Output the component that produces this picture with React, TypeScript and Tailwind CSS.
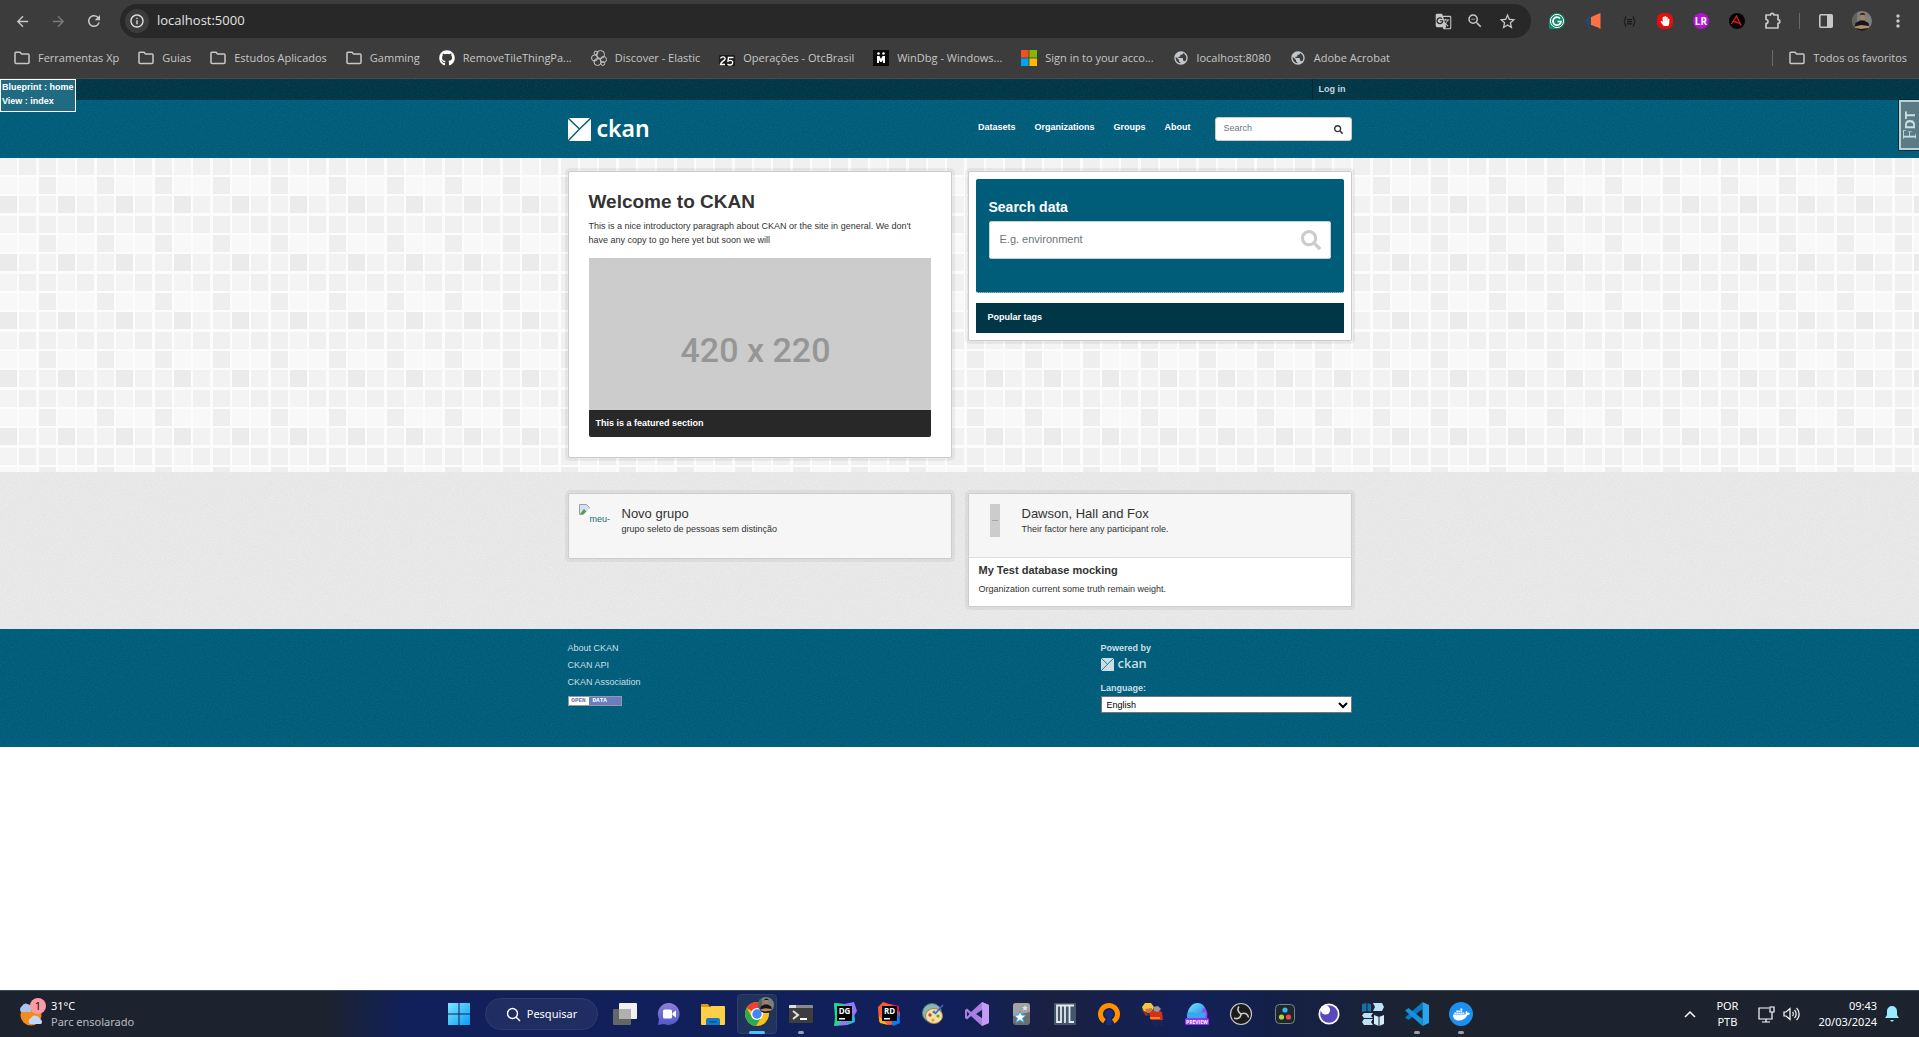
import React from 'react';
import { FaGithub, FaDocker, FaSearch, FaHandPaper } from 'react-icons/fa';
import { MdArrowBack, MdArrowForward, MdRefresh, MdInfoOutline, MdStarBorder, MdMoreVert, MdGTranslate, MdZoomOut, MdPublic } from 'react-icons/md';

/* ---------- shared drawings ---------- */

function Grain({ id, opacity }: { id: string; opacity: string }) {
  return (
    <svg className="pointer-events-none absolute inset-0 h-full w-full" aria-hidden="true" opacity={opacity}>
      <filter id={id}>
        <feTurbulence type="fractalNoise" baseFrequency="0.7" numOctaves="2" />
        <feColorMatrix type="matrix" values="0 0 0 0 1  0 0 0 0 1  0 0 0 0 1  2.5 0 0 0 -1" />
      </filter>
      <rect width="100%" height="100%" filter={`url(#${id})`} />
    </svg>
  );
}

function Tiles() {
  const rows = [
    ['#f4f4f4', '#f0f0f0', '#f0f0f0'],
    ['#f8f8f8', '#f8f8f8', '#eeeeee'],
    ['#ebebeb', '#f2f2f2', '#f2f2f2'],
  ];
  const xs = [0, 19, 39];
  const ys = [0, 19, 38];
  return (
    <svg className="absolute inset-0 h-full w-full" aria-hidden="true">
      <pattern id="tiles" width="58" height="58" patternUnits="userSpaceOnUse">
        <rect width="58" height="58" fill="#fcfcfc" />
        {rows.map((r, j) => r.map((c, i) => <rect key={`${i}-${j}`} x={xs[i]} y={ys[j]} width="17" height="17" fill={c} />))}
      </pattern>
      <rect width="100%" height="100%" fill="url(#tiles)" />
    </svg>
  );
}

function CkanMark({ className, fill, line }: { className: string; fill: string; line: string }) {
  return (
    <svg className={className} viewBox="0 0 23 23" aria-hidden="true">
      <rect width="23" height="23" rx="1" fill={fill} />
      <path d="M0 0 L11.5 11 L23 0 M11.5 11 L0 23" stroke={line} strokeWidth="1.4" fill="none" />
    </svg>
  );
}

function Folder() {
  return (
    <svg className="h-4 w-4 shrink-0" viewBox="0 0 16 16" fill="none" stroke="#c7c7c7" strokeWidth="1.5" aria-hidden="true">
      <path d="M1 3.2a1 1 0 0 1 1-1h4l1.6 1.8H14a1 1 0 0 1 1 1v7.6a1 1 0 0 1-1 1H2a1 1 0 0 1-1-1z" />
    </svg>
  );
}

/* ---------- browser toolbar ---------- */

function Elastic() {
  return (
    <svg className="h-4 w-4 shrink-0" viewBox="0 0 16 16" fill="none" stroke="#c7c7c7" strokeWidth="1" aria-hidden="true">
      <circle cx="9.500" cy="4.500" r="4" />
      <circle cx="5" cy="3" r="1.900" />
      <circle cx="3.500" cy="8" r="3" />
      <circle cx="6.500" cy="12" r="3.500" />
      <circle cx="12.500" cy="9.500" r="3" />
      <circle cx="11.800" cy="13.500" r="1.900" />
    </svg>
  );
}

function Squiggle() {
  return (
    <svg className="h-4 w-4 shrink-0" viewBox="0 0 16 16" fill="none" aria-hidden="true">
      <rect y="5" width="16" height="11" fill="#1c1c1c" rx="1" />
      <path d="M1.500 8.500c1-2.500 5-2 4.500.5C5.500 11 2.500 11 1.500 14.500h4.500M14.500 7.500h-5l-.5 3.500c3-1.500 5.500 0 4.500 2.500s-4 1.500-5 .5" stroke="#fff" strokeWidth="1.400" />
    </svg>
  );
}

function WinDbg() {
  return (
    <svg className="h-4 w-4 shrink-0" viewBox="0 0 16 16" aria-hidden="true">
      <rect width="16" height="16" fill="#0b0b0b" />
      <path d="M4 13V6h2.500L8 9l1.500-3H12v7h-2v-3l-1.200 2H7.200L6 10v3z" fill="#fff" />
      <circle cx="5.500" cy="3.500" r="1.300" fill="#fff" />
      <circle cx="10.500" cy="3.500" r="1.300" fill="#fff" />
    </svg>
  );
}

function Microsoft() {
  return (
    <svg className="h-4 w-4 shrink-0" viewBox="0 0 16 16" aria-hidden="true">
      <rect width="7.600" height="7.600" fill="#f25022" />
      <rect x="8.400" width="7.600" height="7.600" fill="#7fba00" />
      <rect y="8.400" width="7.600" height="7.600" fill="#00a4ef" />
      <rect x="8.400" y="8.400" width="7.600" height="7.600" fill="#ffb900" />
    </svg>
  );
}

const globe = <MdPublic className="h-4 w-4 shrink-0 text-[#c3c7cb]" />;

const bookmarks: { icon: React.ReactNode; label: string }[] = [
  { icon: <Folder />, label: 'Ferramentas Xp' },
  { icon: <Folder />, label: 'Guias' },
  { icon: <Folder />, label: 'Estudos Aplicados' },
  { icon: <Folder />, label: 'Gamming' },
  { icon: <FaGithub className="h-4 w-4 shrink-0 text-white" />, label: 'RemoveTileThingPa...' },
  { icon: <Elastic />, label: 'Discover - Elastic' },
  { icon: <Squiggle />, label: 'Operações - OtcBrasil' },
  { icon: <WinDbg />, label: 'WinDbg - Windows...' },
  { icon: <Microsoft />, label: 'Sign in to your acco...' },
  { icon: globe, label: 'localhost:8080' },
  { icon: globe, label: 'Adobe Acrobat' },
];

function Avatar({ className }: { className: string }) {
  return (
    <svg className={className} viewBox="0 0 20 20" aria-hidden="true">
      <clipPath id="face"><circle cx="10" cy="10" r="10" /></clipPath>
      <g clipPath="url(#face)">
        <rect width="20" height="20" fill="#7d8079" />
        <rect width="5" height="20" fill="#5f635c" />
        <path d="M2 20l1.500-8L8 9.500h4l4.500 2.500L18 20z" fill="#14161a" />
        <ellipse cx="10.500" cy="5.500" rx="2.500" ry="3.300" fill="#a9805f" />
        <path d="M7.800 4.500c0-3.500 5.500-3.500 5.500 0l-1-.8h-3.500z" fill="#1c1512" />
        <path d="M3 15.500l6-1.500 8 1v2l-8 1-6-1z" fill="#b48a66" />
      </g>
    </svg>
  );
}

function IconButton({ label, children }: { label: string; children: React.ReactNode }) {
  return (
    <button type="button" aria-label={label} className="flex h-9 w-9 items-center justify-center text-[#c7c7c7]">
      {children}
    </button>
  );
}

function Toolbar() {
  return (
    <header className="border-b border-[#4a4a4a] bg-[#3c3c3c] font-['Open_Sans','Noto_Sans',sans-serif]">
      <div className="flex h-[42px] items-center pl-1 pr-[3px]">
        <IconButton label="Back"><MdArrowBack className="h-[17px] w-[17px]" /></IconButton>
        <IconButton label="Forward"><MdArrowForward className="h-[17px] w-[17px] text-[#7b7b7b]" /></IconButton>
        <IconButton label="Reload"><MdRefresh className="h-[18px] w-[18px]" /></IconButton>
        <div className="ml-2 flex h-[34px] flex-1 items-center rounded-full bg-[#282828] pl-[5px] pr-2">
          <span className="flex h-6 w-6 items-center justify-center rounded-full bg-[#3c3c3c] text-[#e3e3e3]">
            <MdInfoOutline className="h-4 w-4" />
          </span>
          <input aria-label="Address" defaultValue="localhost:5000" className="ml-2 min-w-0 flex-1 bg-transparent text-[13px] text-[#e3e3e3] outline-none" />
          <button type="button" aria-label="Translate" className="flex h-8 w-8 items-center justify-center text-[#c7c7c7]"><MdGTranslate className="h-[17px] w-[17px]" /></button>
          <button type="button" aria-label="Zoom" className="flex h-8 w-8 items-center justify-center text-[#c7c7c7]"><MdZoomOut className="h-[18px] w-[18px]" /></button>
          <button type="button" aria-label="Bookmark" className="flex h-8 w-8 items-center justify-center text-[#c7c7c7]"><MdStarBorder className="h-[19px] w-[19px]" /></button>
        </div>
        <div className="ml-2 flex items-center">
          <IconButton label="Grammarly">
            <svg className="h-4 w-4" viewBox="0 0 16 16" fill="none"><path d="M0 8a8 8 0 1 1 8 8H0z" fill="#128a6c" /><circle cx="8" cy="8" r="6.600" stroke="#fff" strokeWidth="1" /><path d="M11 5.500A4 4 0 1 0 12 8.500H8.500" stroke="#fff" strokeWidth="1.700" /></svg>
          </IconButton>
          <IconButton label="Announcer">
            <svg className="h-4 w-4" viewBox="0 0 16 16"><path d="M5 4.500L13 1l2.500-1v16L13 14.500 5 11.500z" fill="#ff7043" /><path d="M6 4v8H4.500l1 3.500H3.500L2 12a4 4 0 0 1-1.500-4A4 4 0 0 1 4 4z" fill="#2a4566" /></svg>
          </IconButton>
          <IconButton label="JSON">
            <svg className="h-[13px] w-[13px]" viewBox="0 0 16 16" fill="none" stroke="#161616" strokeWidth="1.400"><path d="M4 2C1.500 2 3.500 7.500 1 8c2.500.5.5 6 3 6M12 2c2.500 0 .5 5.500 3 6-2.500.5-.5 6-3 6M5 5.500h6M5 8.200h6M5 11h6" /></svg>
          </IconButton>
          <IconButton label="Blocker">
            <span className="flex h-4 w-4 items-center justify-center rounded-[6px] bg-[#e60d0d] text-white"><FaHandPaper className="h-[10px] w-[10px]" /></span>
          </IconButton>
          <IconButton label="LR">
            <span className="flex h-4 w-4 items-center justify-center rounded-full bg-[#b511d6] text-[10px] font-bold leading-none text-white">LR</span>
          </IconButton>
          <IconButton label="A">
            <svg className="h-4 w-4" viewBox="0 0 16 16" fill="none"><circle cx="8" cy="8" r="8" fill="#050505" /><path d="M2.500 11L7.500 3l4.500 9.500M4.500 8.500c3 0 4 1 8 3" stroke="#e31b23" strokeWidth="1.300" /></svg>
          </IconButton>
          <IconButton label="Extensions">
            <svg className="h-[18px] w-[18px]" viewBox="0 0 18 18" fill="none" stroke="#c7c7c7" strokeWidth="1.700" strokeLinejoin="round"><path d="M2 3h4.500a1.700 1.700 0 0 1 3.400 0H14v4.700a1.800 1.800 0 0 1 0 3.600V16H2v-4.500a2 2 0 0 0 0-4z" /></svg>
          </IconButton>
          <span className="mx-2 h-4 w-px bg-[#6a6a6a]" />
          <IconButton label="Side panel">
            <svg className="h-4 w-4" viewBox="0 0 16 16"><rect x="1.800" y="1.800" width="12.400" height="12.400" rx="1" fill="none" stroke="#c7c7c7" strokeWidth="1.600" /><rect x="9" y="2" width="5" height="12" fill="#c7c7c7" /></svg>
          </IconButton>
          <IconButton label="Profile"><Avatar className="h-5 w-5" /></IconButton>
          <IconButton label="Menu"><MdMoreVert className="h-5 w-5" /></IconButton>
        </div>
      </div>
      <nav className="flex h-9 items-center pb-1 pl-[14px] pr-3 text-[11px] text-[#c7c7c7]">
        <div className="flex flex-1 items-center gap-[19px]">
          {bookmarks.map((b) => (
            <a key={b.label} href="#" className="flex items-center gap-2 whitespace-nowrap">
              {b.icon}
              {b.label}
            </a>
          ))}
        </div>
        <span className="mr-4 h-4 w-px bg-[#6a6a6a]" />
        <a href="#" className="flex items-center gap-2 whitespace-nowrap"><Folder />Todos os favoritos</a>
      </nav>
    </header>
  );
}

/* ---------- site ---------- */

const container = 'relative mx-auto w-[784px] max-w-full';

function SiteHeader() {
  return (
    <>
      <div className="relative bg-[#013647]">
        <Grain id="grain-top" opacity="0.04" />
        <div className={`${container} flex h-[21px] justify-end`}>
          <a href="#" className="flex items-center border-l border-[#012835] px-[6px] text-[9px] font-bold text-[#c6d7db]">Log in</a>
        </div>
      </div>
      <div className="relative bg-[#005d7a]">
        <Grain id="grain-head" opacity="0.04" />
        <div className={`${container} flex h-[58px] items-center justify-between`}>
          <a href="#" className="flex items-center gap-[6px] font-['Noto_Sans',sans-serif] text-[23px] font-semibold leading-6 text-white">
            <CkanMark className="h-[23px] w-[23px]" fill="#fff" line="#005d7a" />
            <span className="pb-[2px]">ckan</span>
          </a>
          <div className="flex items-center gap-6">
            <nav className="flex gap-[19px] pb-[2px] text-[9px] font-bold text-white">
              <a href="#">Datasets</a>
              <a href="#">Organizations</a>
              <a href="#">Groups</a>
              <a href="#">About</a>
            </nav>
            <form className="flex h-6 w-[137px] items-center rounded-[3px] border border-[#ccc] bg-white px-2">
              <input aria-label="Search" placeholder="Search" className="min-w-0 flex-1 text-[9px] outline-none placeholder:text-[#6c757d]" />
              <button type="button" aria-label="Submit search" className="text-[#333]"><FaSearch className="h-[9px] w-[9px]" /></button>
            </form>
          </div>
        </div>
      </div>
    </>
  );
}

function Hero() {
  return (
    <main className="relative">
      <Tiles />
      <div className={`${container} grid grid-cols-2 items-start gap-4 pb-[14px] pt-[13px]`}>
        <section className="rounded-[2px] border border-[#ccc] bg-white p-5 shadow-[0_0_0_3px_rgba(0,0,0,0.05)]">
          <h1 className="text-[19px] font-bold leading-5 text-[#333]">Welcome to CKAN</h1>
          <p className="mt-[7px] text-[9px] leading-[14px]">
            This is a nice introductory paragraph about CKAN or the site in general. We don't have any copy to go here yet but soon we will
          </p>
          <figure className="mt-[11px]">
            <div className="flex h-[152px] items-end justify-center bg-[#ccc] pb-10 pr-2 font-[Roboto,sans-serif] text-[34px] font-medium leading-[40px] text-[#969696]">420 x 220</div>
            <figcaption className="rounded-b-[2px] bg-[#282828] px-[7px] pb-px text-[9px] font-bold leading-[26px] text-white">This is a featured section</figcaption>
          </figure>
        </section>
        <section className="rounded-[2px] border border-[#ccc] bg-white p-[7px] shadow-[0_0_0_3px_rgba(0,0,0,0.05)]">
          <div className="h-[114px] rounded-[2px] border-b border-dotted border-[#ddd] bg-[#005d7a] px-[13px] pt-5">
            <label htmlFor="q" className="block text-[14px] font-bold leading-4 text-white">Search data</label>
            <div className="mt-[6px] flex h-[38px] items-center rounded-[2px] border border-[#ccc] bg-white pl-[10px] pr-[9px]">
              <input id="q" placeholder="E.g. environment" className="min-w-0 flex-1 pb-[2px] text-[11px] outline-none placeholder:text-[#6c757d]" />
              <button type="button" aria-label="Search datasets" className="text-[#ccc]"><FaSearch className="h-5 w-5" /></button>
            </div>
          </div>
          <h2 className="mt-[10px] bg-[#013647] px-3 pb-[2px] text-[9px] font-bold leading-7 text-white">Popular tags</h2>
        </section>
      </div>
    </main>
  );
}

function Featured() {
  return (
    <div className="relative bg-[#e6e6e6]">
      <Grain id="grain-mid" opacity="0.25" />
      <div className={`${container} grid grid-cols-2 items-start gap-4 pb-[22px] pt-[21px]`}>
        <section className="flex h-[66px] gap-[10px] rounded-[2px] border border-[#ccc] bg-[#f6f6f6] px-[10px] pt-[10px] shadow-[0_0_0_3px_rgba(0,0,0,0.05)]">
          <a href="#" className="relative h-[33px] w-[33px] shrink-0 text-[9px] text-[#206b82]">
            <svg className="h-[11px] w-[11px]" viewBox="0 0 11 11" aria-hidden="true">
              <path d="M.5.500h7l3 3v7H.5z" fill="#cfe0fb" stroke="#a0a0a0" />
              <path d="M1 10l4-5 5 5z" fill="#54a245" />
              <path d="M4 11L11 4v7z" fill="#fff" />
            </svg>
            <span className="absolute left-[11px] top-[9px] leading-3">meu-</span>
          </a>
          <div>
            <h3 className="mt-[3px] text-[13px] font-medium leading-[13px] text-[#333]">Novo grupo</h3>
            <p className="mt-[3px] text-[9px] leading-3">grupo seleto de pessoas sem distinção</p>
          </div>
        </section>
        <section className="rounded-[2px] border border-[#ccc] bg-white shadow-[0_0_0_3px_rgba(0,0,0,0.05)]">
          <div className="flex h-[64px] gap-[10px] border-b border-[#ddd] bg-[#f6f6f6] px-[10px] pt-[10px]">
            <a href="#" aria-label="Dawson, Hall and Fox" className="flex h-[33px] w-[33px] shrink-0 justify-center">
              <span className="flex h-[33px] w-[10px] items-center justify-center bg-[#ccc]"><span className="h-px w-[6px] bg-[#a5a5a5]" /></span>
            </a>
            <div>
              <h3 className="mt-[3px] text-[13px] font-medium leading-[13px] text-[#333]">Dawson, Hall and Fox</h3>
              <p className="mt-[3px] text-[9px] leading-3">Their factor here any participant role.</p>
            </div>
          </div>
          <div className="px-[10px] pb-[11px] pt-[5px]">
            <h3 className="text-[11px] font-bold leading-[14px] text-[#333]">My Test database mocking</h3>
            <p className="mt-[6px] text-[9px] leading-3">Organization current some truth remain weight.</p>
          </div>
        </section>
      </div>
    </div>
  );
}

function SiteFooter() {
  return (
    <footer className="relative bg-[#005d7a] text-[9px] text-[#ccdfe4]">
      <Grain id="grain-foot" opacity="0.04" />
      <div className={`${container} flex h-[118px] justify-between pt-3`}>
        <ul className="flex flex-col gap-[3px] leading-[14px]">
          <li><a href="#">About CKAN</a></li>
          <li><a href="#">CKAN API</a></li>
          <li><a href="#">CKAN Association</a></li>
          <li className="mt-1">
            <a href="#" className="flex h-[10px] w-[54px] border border-[#999] bg-white font-['Liberation_Mono',monospace] text-[6px] font-bold leading-[8px]">
              <span className="w-5 text-center text-[#6273b5]">OPEN</span>
              <span className="flex-1 bg-[#6a7dc0] pl-1 text-white">DATA</span>
            </a>
          </li>
        </ul>
        <div className="w-[251px]">
          <strong className="block leading-[14px]">Powered by</strong>
          <a href="#" className="mt-[3px] flex h-[13px] items-center gap-1 font-['Noto_Sans',sans-serif] text-[13px] font-medium leading-[13px]">
            <CkanMark className="h-[13px] w-[13px]" fill="#ccdfe4" line="#005d7a" />
            <span className="pb-[2px]">ckan</span>
          </a>
          <label htmlFor="lang" className="mt-[10px] block font-bold leading-[14px]">Language:</label>
          <div className="relative">
            <select id="lang" className="mt-px block h-[17px] w-full appearance-none border border-[#767676] bg-white pl-[5px] text-[9px] leading-[14px] text-black">
              <option>English</option>
            </select>
            <svg className="pointer-events-none absolute right-1 top-1 h-[10px] w-[10px]" viewBox="0 0 10 10" fill="none" stroke="#000" strokeWidth="2" aria-hidden="true"><path d="M1 3l4 4 4-4" /></svg>
          </div>
        </div>
      </div>
    </footer>
  );
}

/* ---------- taskbar ---------- */

const box = 'h-6 w-6';

const apps: { name: string; art: React.ReactNode; state?: 'active' | 'open' }[] = [
  { name: 'Task view', art: <svg className={box} viewBox="0 0 24 24"><rect x="6" y="1" width="18" height="16" rx="1" fill="#f1f1f1" /><rect y="7" width="18" height="16" rx="1" fill="#666" /><rect x="6" y="7" width="12" height="10" fill="#b0b0b0" /></svg> },
  { name: 'Chat', art: <svg className={box} viewBox="0 0 24 24"><defs><linearGradient id="chat" x1="0" y1="0" x2="0" y2="1"><stop stopColor="#8f7fd8" /><stop offset="1" stopColor="#5059c9" /></linearGradient></defs><path d="M12 1a11 11 0 1 1-5 21L1 23l1-6A11 11 0 0 1 12 1z" fill="url(#chat)" /><rect x="6" y="7.500" width="9" height="9" rx="1.500" fill="#fff" /><path d="M15.500 11l3.500-2.500v7L15.500 13z" fill="#fff" /></svg> },
  { name: 'File explorer', art: <svg className={box} viewBox="0 0 24 24"><path d="M0 3a1 1 0 0 1 1-1h6l2 3H0z" fill="#dd9a10" /><path d="M0 5h9l1-1h13a1 1 0 0 1 1 1v17a1 1 0 0 1-1 1H1a1 1 0 0 1-1-1z" fill="#ffcf48" /><path d="M5 23v-5a2 2 0 0 1 2-2h10a2 2 0 0 1 2 2v5z" fill="#1279c9" /><rect x="8" y="19" width="8" height="1.500" fill="#0a4f93" /></svg> },
  { name: 'Chrome', state: 'active', art: <span className="relative"><svg className={box} viewBox="0 0 24 24"><circle cx="12" cy="12" r="12" fill="#fbc116" /><path d="M12 12L1.600 6A12 12 0 0 1 22.400 6H12z" fill="#ea4335" /><path d="M1.600 6A12 12 0 0 0 11 23.950L16.500 15 6.800 15z" fill="#2da94f" /><circle cx="12" cy="12" r="6" fill="#fff" /><circle cx="12" cy="12" r="4.700" fill="#4285f4" /></svg><span className="absolute -right-[5px] -top-[5px]"><Avatar className="h-4 w-4" /></span></span> },
  { name: 'Terminal', state: 'open', art: <svg className={box} viewBox="0 0 24 24"><rect y="3" width="24" height="18" rx="1" fill="#3d3d3d" /><path d="M0 6V4a1 1 0 0 1 1-1h22a1 1 0 0 1 1 1v2z" fill="#8a8a8a" /><path d="M0 6V4a1 1 0 0 1 1-1h6v3z" fill="#ddd" /><path d="M4 9l5 4-5 4" fill="none" stroke="#e0e0e0" strokeWidth="2" /><rect x="11" y="16" width="7" height="2" fill="#fff" /></svg> },
  { name: 'DataGrip', art: <svg className={box} viewBox="0 0 24 24"><path d="M1 1l10 1 10-2 3 9-3 5 1 6-8 3-12 1 1-8z" fill="#9775f8" /><path d="M1 1l10 1 3 6-8 15-5 1 1-8z" fill="#22d88f" /><path d="M12 23l8-2 2-4-1-5z" fill="#22b8cf" /><rect x="4" y="4" width="15" height="15" fill="#000" /><text x="11.500" y="12" textAnchor="middle" fontSize="8" fontWeight="700" fontFamily="Open Sans" fill="#fff">DG</text><rect x="6" y="16" width="6" height="1.500" fill="#fff" /></svg> },
  { name: 'Rider', art: <svg className={box} viewBox="0 0 24 24"><path d="M1 5l5-5 6 2 9 2 2 8-2 10-9 1L2 20z" fill="#ff5a36" /><path d="M2 14l9 9-8-2z" fill="#fdb60d" /><path d="M14 18l8-8 1 11-7 3z" fill="#087cfa" /><path d="M14 2l8 2v7z" fill="#dd1265" /><rect x="5" y="4" width="15" height="15" fill="#000" /><text x="12.500" y="12" textAnchor="middle" fontSize="8" fontWeight="700" fontFamily="Open Sans" fill="#fff">RD</text><rect x="7" y="16" width="6" height="1.500" fill="#fff" /></svg> },
  { name: 'Paint', art: <svg className={box} viewBox="0 0 24 24"><circle cx="11" cy="11" r="9.500" fill="#8ab7b5" stroke="#4e7d7e" /><ellipse cx="13" cy="14" rx="8.500" ry="7.500" fill="#f3dfa8" stroke="#a98543" /><circle cx="9" cy="13" r="1.700" fill="#d6402b" /><circle cx="13" cy="10" r="1.500" fill="#3c7cd0" /><circle cx="17" cy="14" r="1.600" fill="#55a630" /><circle cx="12" cy="18" r="1.600" fill="#e7a31c" /><path d="M14 12l8-9" stroke="#3b63c4" strokeWidth="1.600" /></svg> },
  { name: 'Visual Studio', art: <svg className={box} viewBox="0 0 24 24"><path d="M17 0l7 3v18l-7 3L6 14l-4 3.500L0 16V8l2-1.500L6 10zM17.500 7.500L11 12l6.500 4.500zM2 9.500v5L4.500 12z" fill="#a77fe0" fillRule="evenodd" /><path d="M17 0l7 3v18l-7 3z" fill="#c9a6f7" opacity=".75" /></svg> },
  { name: 'Anki', art: <svg className={box} viewBox="0 0 24 24"><rect x="4" y="1" width="17" height="22" rx="3" fill="#6d6d6d" /><path d="M4 4a3 3 0 0 1 3-3h11a3 3 0 0 1 3 3v6L4 14z" fill="#a3a3a3" /><path d="M11 9l1.600 4 4.400.3-3.400 2.800 1.200 4.400-3.800-2.500-3.800 2.500 1.200-4.400L5 13.300l4.400-.3z" fill="#fff" stroke="#3ea6e6" /><path d="M16 3l.9 2 2.100.2-1.700 1.400.6 2.200L16 7.600l-1.900 1.200.6-2.200L13 5.200 15.100 5z" fill="#cfe9fa" /></svg> },
  { name: 'OTC', art: <svg className={box} viewBox="0 0 24 24" fill="none"><rect x="1" y="1" width="22" height="22" fill="#43566b" /><path d="M4 3.500h4v16.500H4zM8 3.500h13M12 3.500v17.500M16.500 3.500V21M21 20h-4" stroke="#e6e9ee" strokeWidth="1.800" /></svg> },
  { name: 'OpenVPN', art: <svg className={box} viewBox="0 0 24 24"><circle cx="12" cy="12" r="8.500" fill="none" stroke="#ff9100" strokeWidth="5" strokeDasharray="44 9.400" transform="rotate(122 12 12)" /><circle cx="12" cy="12" r="4" fill="#1a2c80" /><path d="M10.500 14h3l1.500 9H9z" fill="#1a2c80" /></svg> },
  { name: 'Game', art: <svg className={box} viewBox="0 0 24 24"><path d="M1 5l3-4h6l3 4-2 4-8 1z" fill="#f4c542" /><path d="M4 7l7-1v5H6z" fill="#c77c43" /><path d="M0 7l5 3 3 3-3 1z" fill="#8a3a1c" /><path d="M8 11l6-4 7 3 1 9-12-1z" fill="#d2301c" /><path d="M12 5l5-1 3 3-3 3-4-1z" fill="#9a9a9a" /><path d="M9 15h10v2H9z" fill="#e98b1a" /><path d="M12 18h10l1 6h-4l-1-3-1 3h-5z" fill="#19245b" /></svg> },
  { name: 'Preview', art: <svg className={box} viewBox="0 0 24 24"><defs><linearGradient id="pv" x1="0" y1="0" x2="1" y2="1"><stop stopColor="#6df0ff" /><stop offset="1" stopColor="#2b73e8" /></linearGradient></defs><path d="M2 16c0-7 3-15 11-15 5 0 9 5 9 15z" fill="url(#pv)" /><path d="M18 6c4 1 5 5 4 10h-6z" fill="#a341ea" /><path d="M2 15c-1-4 3-5 5-5s3 2 6 2 5-3 8-1l-1 5H2z" fill="#35a8f2" /><rect y="16" width="24" height="7" rx="1.500" fill="#9333ea" /><text x="12" y="21.500" textAnchor="middle" fontSize="5" fontWeight="700" fontFamily="Open Sans" fill="#fff">PREVIEW</text></svg> },
  { name: 'OBS', art: <svg className={box} viewBox="0 0 24 24" fill="none"><circle cx="12" cy="12" r="10.500" fill="#1b1b1b" stroke="#c9c9c9" strokeWidth="1.200" /><path d="M12 12c-3-2-4-5-2-7.500M12 12c4-2 7 0 7.500 3.500M12 12c0 4-3.500 5.500-7 4" stroke="#c9c9c9" strokeWidth="1.600" /></svg> },
  { name: 'DaVinci Resolve', art: <svg className={box} viewBox="0 0 24 24"><rect x="2.500" y="2.500" width="19" height="19" rx="4" fill="#1e2730" stroke="#6e8b7a" /><circle cx="12" cy="8" r="2.600" fill="#35b7e8" /><circle cx="8.500" cy="15" r="2.600" fill="#b4d335" /><circle cx="15.500" cy="15" r="2.600" fill="#ee4b45" /></svg> },
  { name: 'Insomnia', art: <svg className={box} viewBox="0 0 24 24"><circle cx="12" cy="12" r="10.500" fill="#fff" /><circle cx="12" cy="12" r="8.800" fill="#5a49bd" /><circle cx="8.500" cy="8" r="4.600" fill="#fff" /></svg> },
  { name: 'Modules', art: <svg className={box} viewBox="0 0 24 24"><path d="M1 2l5-1 4 1v8l-4-1-5 1z" fill="#1a6fa3" /><path d="M12 1h9l2 4-2 4h-9l2-4z" fill="#bfe0f2" /><path d="M3 11h9l-2 3 2 2H3l-2-2.500zM3 17h9l-2 3 2 3H3l-2-3z" fill="#bfe0f2" /><path d="M13 13l5 2 5-2v9l-5 2-5-2z" fill="#d5ebf6" /><path d="M18 15v9M6 1v8" stroke="#17213d" /></svg> },
  { name: 'VS Code', state: 'open', art: <svg className={box} viewBox="0 0 24 24"><path d="M17.500 0v7L3.500 18 0 15.500z" fill="#0a78c2" /><path d="M17.500 24v-7L3.500 6 0 8.500z" fill="#1790dd" /><path d="M17.500 0L24 3v18l-6.500 3z" fill="#29a3ee" /></svg> },
  { name: 'Docker', state: 'open', art: <span className="flex h-6 w-6 items-center justify-center rounded-full bg-[#1d8fee] text-white"><FaDocker className="h-[17px] w-[17px]" /></span> },
];

function Taskbar() {
  return (
    <footer className="relative flex h-[47px] items-center border-t border-[#3e4a56] bg-[linear-gradient(90deg,#1c232f_0%,#1c232f_17%,#11205a_21%,#11205a_50%,#1a2040_55%,#12215a_62%,#141f48_66%,#1c232f_74%,#1c232f_100%)] font-['Noto_Sans','Open_Sans',sans-serif] text-[11px] text-white">
      <div className="flex flex-1 items-center gap-[5px] pl-[19px]">
        <svg className="h-[33px] w-[27px]" viewBox="0 0 27 33" aria-hidden="true">
          <circle cx="12" cy="17" r="10.500" fill="#f28c1e" />
          <path d="M2 14a4 4 0 0 1 1-6 5 5 0 0 1 9 1v5z" fill="#a9c4ee" />
          <path d="M11 26a3.500 3.500 0 0 1 1-6 5 5 0 0 1 9 1 3 3 0 0 1 1 5z" fill="#c5d8f6" />
          <circle cx="19" cy="8" r="8" fill="#ff99a4" />
          <text x="19" y="12" textAnchor="middle" fontSize="11" fontFamily="Noto Sans" fill="#111">1</text>
        </svg>
        <div className="leading-4">
          <div>31°C</div>
          <div className="text-[#b9bcc1]">Parc ensolarado</div>
        </div>
      </div>
      <div className="flex items-center pl-3">
        <button type="button" aria-label="Start" className="mr-[14px]">
          <svg className="block h-6 w-6" viewBox="0 0 24 24"><defs><linearGradient id="win" x1="0" y1="0" x2="1" y2="1"><stop stopColor="#7be8ff" /><stop offset="1" stopColor="#0a9bf5" /></linearGradient></defs><path d="M1 1h10.500v10.500H1zM12.500 1H23v10.500H12.500zM1 12.500h10.500V23H1zM12.500 12.500H23V23H12.500z" fill="url(#win)" /></svg>
        </button>
        <button type="button" className="mr-[5px] flex h-8 w-[113px] items-center justify-center gap-[6px] rounded-full border border-[#2c3a6e] bg-[#202d62]">
          <svg className="h-[15px] w-[15px]" viewBox="0 0 15 15" fill="none" stroke="#fff" strokeWidth="1.400" aria-hidden="true"><circle cx="6.500" cy="6.500" r="5" /><path d="M10 10l4 4" /></svg>
          Pesquisar
        </button>
        {apps.map((a) => (
          <button key={a.name} type="button" aria-label={a.name} className="relative flex h-[46px] w-11 items-center justify-center">
            {a.state === 'active' && <span className="absolute inset-x-[2px] inset-y-[3px] rounded-[4px] border border-[#2d4069] bg-[#1f335c]" />}
            <span className="relative flex">{a.art}</span>
            {a.state === 'active' && <span className="absolute bottom-[3px] h-[3px] w-4 rounded-full bg-[#4cc2ff]" />}
            {a.state === 'open' && <span className="absolute bottom-[3px] h-[3px] w-[6px] rounded-full bg-[#9a9fad]" />}
          </button>
        ))}
      </div>
      <div className="flex flex-1 items-center justify-end pr-5">
        <svg className="mr-5 h-3 w-3" viewBox="0 0 12 12" fill="none" stroke="#fff" strokeWidth="1.500" aria-hidden="true"><path d="M1 9l5-5 5 5" /></svg>
        <div className="mr-5 text-center leading-4"><div>POR</div><div>PTB</div></div>
        <svg className="mr-2 h-[17px] w-[17px]" viewBox="0 0 17 17" fill="none" stroke="#fff" strokeWidth="1.200" aria-hidden="true"><path d="M11 2H1v11h13V9M4 16h8M8 13v3M12 1h4v5h-4zM14 6v3" /></svg>
        <svg className="mr-[18px] h-4 w-[17px]" viewBox="0 0 17 16" fill="none" stroke="#fff" strokeWidth="1.200" aria-hidden="true"><path d="M1 6v4h2l4 3.500v-11L3 6zM9.500 6c1 1 1 3 0 4M11.500 4c2.200 2 2.200 6 0 8M13.500 2c3.500 3 3.500 9 0 12" /></svg>
        <div className="mr-2 text-right leading-4"><div>09:43</div><div>20/03/2024</div></div>
        <svg className="h-4 w-[14px]" viewBox="0 0 14 16" aria-hidden="true"><path d="M7 0a5 5 0 0 1 5 5v4l2 3H0l2-3V5a5 5 0 0 1 5-5zM5 14h4l-2 2z" fill="#99ebff" /></svg>
      </div>
    </footer>
  );
}

export default function App() {
  return (
    <div className="flex min-h-screen flex-col bg-white font-['Liberation_Sans',Arial,sans-serif] text-[#333]">
      <Toolbar />
      <div className="relative flex-1">
        <SiteHeader />
        <Hero />
        <Featured />
        <SiteFooter />
        <div className="absolute left-0 top-0 border border-white bg-[#206b82] px-px pb-[3px] text-[9px] font-bold leading-[14px] text-white">
          <div>Blueprint : home</div>
          <div>View : index</div>
        </div>
        <button type="button" className="absolute right-0 top-[21px] flex h-[50px] w-5 items-center justify-center border-2 border-r-0 border-[#b5d3d8] bg-[#5c7a83] outline-1 outline-[#0b2b36]">
          <span className="flex rotate-180 items-center leading-none text-[#c8dfe3] [writing-mode:vertical-rl]">
            <span className="font-['Liberation_Serif',serif] text-[18px] leading-[18px]">F</span>
            <span className="font-['Open_Sans',sans-serif] text-[14px] font-bold leading-[18px]">DT</span>
          </span>
        </button>
      </div>
      <Taskbar />
    </div>
  );
}
